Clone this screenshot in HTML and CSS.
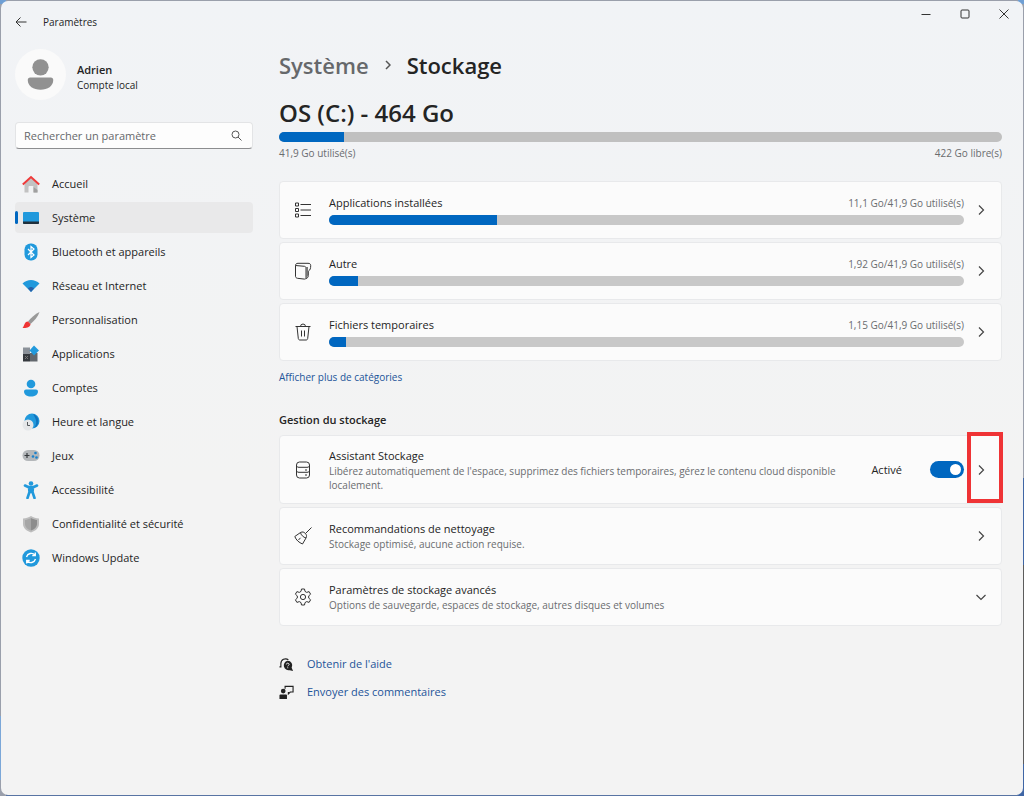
FILE: index.html
```html
<!DOCTYPE html>
<html lang="fr">
<head>
  <meta charset="UTF-8" />
  <meta name="viewport" content="width=device-width, initial-scale=1.0"/>
  <title>Paramètres</title>
  <link rel="stylesheet" href="styles.css">
</head>
<body>

<div class="window">
  <header class="titlebar">
    <button class="back" aria-label="Retour">
      <svg width="12" height="12" viewBox="0 0 12 12"><path d="M11.5 6H1M5.5 1.5L1 6l4.500 4.500"/></svg>
    </button>
    <span class="app-name">Paramètres</span>
    <div class="window-buttons">
      <button aria-label="Réduire"><svg width="10" height="10" viewBox="0 0 10 10"><path d="M0.500 5.500h9"/></svg></button>
      <button aria-label="Agrandir"><svg width="10" height="10" viewBox="0 0 10 10"><rect x="1" y="1" width="8" height="8" rx="1"/></svg></button>
      <button aria-label="Fermer"><svg width="10" height="10" viewBox="0 0 10 10"><path d="M0.500 0.500l9 9M9.500 0.500l-9 9"/></svg></button>
    </div>
  </header>

  <div class="layout">
    <aside class="sidebar">
      <div class="profile">
        <svg class="avatar" viewBox="0 0 50 50">
          <circle cx="25" cy="25" r="25" fill="#fafafa"/>
          <circle cx="25" cy="18" r="8" fill="#919191"/>
          <path d="M15 28h20a2.500 2.500 0 0 1 2.500 2.500C37.500 36.500 32 40 25 40s-12.500-3.500-12.500-9.500A2.500 2.500 0 0 1 15 28z" fill="#919191"/>
        </svg>
        <div class="who">
          <div class="name">Adrien</div>
          <div class="account">Compte local</div>
        </div>
      </div>

      <div class="search">
        <input type="text" placeholder="Rechercher un paramètre" aria-label="Rechercher un paramètre">
        <svg width="11" height="11" viewBox="0 0 11 11"><circle cx="4.500" cy="4.500" r="3.500"/><path d="M7 7l3.500 3.500"/></svg>
      </div>

      <nav>
        <a href="#">
          <svg viewBox="0 0 18 18"><path d="M2.500 8L9 3l6.500 5v9.500h-4V12a1 1 0 0 0-1-1h-3a1 1 0 0 0-1 1v5.500h-4z" fill="#c2c2c2"/><path d="M11.500 17.500V12l4 3v2.500z" fill="#a0a0a0"/><path d="M0.800 9.500L9 2l8.200 7.500" fill="none" stroke="#ef3a3a" stroke-width="2"/></svg>
          Accueil
        </a>
        <a href="#" class="active">
          <svg viewBox="0 0 18 18"><rect x="1" y="3" width="16" height="12" rx="1" fill="#2199dc"/><path d="M1 12.500h16V14a1 1 0 0 1-1 1H2a1 1 0 0 1-1-1z" fill="#20303c"/></svg>
          Système
        </a>
        <a href="#">
          <svg viewBox="0 0 18 18"><rect x="2.500" y="0.500" width="13" height="17" rx="6" fill="#2199dc"/><path d="M6 6l6 6-3 2.500v-11L12 6l-6 6" fill="none" stroke="#fff" stroke-width="1.200"/></svg>
          Bluetooth et appareils
        </a>
        <a href="#">
          <svg viewBox="0 0 18 18"><path d="M0.500 6.500C5 1.800 13 1.800 17.500 6.500L9 15z" fill="#2199dc"/><path d="M6 11.500c1.500-2 4.500-2 6 0L9 15z" fill="#2860a8"/></svg>
          Réseau et Internet
        </a>
        <a href="#">
          <svg viewBox="0 0 18 18"><path d="M17.500 1C13 3 9 7 6 10.500l2.500 2.500C12 10 16 6 17.500 1z" fill="#999"/><path d="M6 10.500l2.500 2.500c0 3-4 4.500-8 4 2-1.500 1.500-6.500 5.500-6.500z" fill="#ef3434"/></svg>
          Personnalisation
        </a>
        <a href="#">
          <svg viewBox="0 0 18 18"><path d="M1 2.500h7V9H1z" fill="#8b9199"/><path d="M1 9h7v7.500H1z" fill="#35393e"/><path d="M8 8h7.500v8.500H8z" fill="#62676d"/><path d="M12 0.500l5 5-5 5-4.500-5z" fill="#2199dc"/><path d="M3 14l3-3M3 11l3 3" stroke="#777"/></svg>
          Applications
        </a>
        <a href="#">
          <svg viewBox="0 0 18 18"><circle cx="9" cy="5" r="4.300" fill="#2199dc"/><path d="M4 10.500h10a2 2 0 0 1 2 2c0 3-3 5-7 5s-7-2-7-5a2 2 0 0 1 2-2z" fill="#2199dc"/></svg>
          Comptes
        </a>
        <a href="#">
          <svg viewBox="0 0 18 18"><circle cx="10" cy="8" r="7.500" fill="#2199dc"/><path d="M11 1a7.500 7.500 0 0 1 1 14c4-5 2-9-1-14z" fill="#1173bd"/><circle cx="6" cy="12" r="5.500" fill="#e4e6e8"/><path d="M5.500 9v3.500H8" fill="none" stroke="#55595d"/></svg>
          Heure et langue
        </a>
        <a href="#">
          <svg viewBox="0 0 18 18"><rect x="0.500" y="3" width="17" height="11" rx="5.500" fill="#b4b7ba"/><path d="M5 6v5M2.500 8.500h5" stroke="#36393c" stroke-width="1.200"/><circle cx="13.500" cy="6" r="1.300" fill="#1b82cc"/><circle cx="11" cy="9.500" r="1.300" fill="#1b82cc"/><circle cx="14.500" cy="10.500" r="1.300" fill="#1b82cc"/></svg>
          Jeux
        </a>
        <a href="#">
          <svg viewBox="0 0 18 18"><circle cx="9" cy="2.500" r="2.300" fill="#2199dc"/><path d="M3 4.500l4 2h4l4-2M9 6v5M7 6l.5 5L5.500 17M11 6l-.5 5 2 6" fill="none" stroke="#2199dc" stroke-width="2.600" stroke-linecap="round"/></svg>
          Accessibilité
        </a>
        <a href="#">
          <svg viewBox="0 0 18 18"><path d="M9 1c2.500 1.600 5 2.300 8 2.500V9c0 4-3.500 7-8 8.500C4.500 16 1 13 1 9V3.500C4 3.300 6.500 2.600 9 1z" fill="#bdbdbd"/><path d="M9 3c2 1.200 4 1.800 6 2v4c0 3-2.500 5.300-6 6.500z" fill="#8d8d8d"/><path d="M9 3C7 4.200 5 4.800 3 5v4c0 3 2.500 5.300 6 6.500z" fill="#a6a6a6"/></svg>
          Confidentialité et sécurité
        </a>
        <a href="#">
          <svg viewBox="0 0 18 18"><circle cx="9" cy="9" r="8.700" fill="#2199dc"/><path d="M4.500 8a5 5 0 0 1 8.500-2M13.500 10a5 5 0 0 1-8.500 2M13.300 3.500V6.500h-3M4.700 14.500v-3h3" fill="none" stroke="#fff" stroke-width="1.300"/></svg>
          Windows Update
        </a>
      </nav>
    </aside>

    <main>
      <h1 class="breadcrumb">
        <a href="#">Système</a>
        <svg width="6" height="10" viewBox="0 0 6 10"><path d="M1 1l4 4-4 4"/></svg>
        <span>Stockage</span>
      </h1>

      <section class="drive">
        <h2>OS (C:) - 464 Go</h2>
        <progress value="41.9" max="464" aria-label="Espace utilisé"></progress>
        <div class="drive-labels"><span>41,9 Go utilisé(s)</span><span>422 Go libre(s)</span></div>
      </section>

      <div class="cards">
        <a href="#" class="card">
          <svg class="icon" viewBox="0 0 18 18"><path d="M1.500 2h3v3h-3zM1.500 7.500h3v3h-3zM1.500 13h3v3h-3zM6.500 3.500H17M6.500 9H17M6.500 14.500H17"/></svg>
          <div class="content">
            <div class="usage"><span class="title">Applications installées</span><span class="size">11,1 Go/41,9 Go utilisé(s)</span></div>
            <progress value="11.1" max="41.9" aria-label="Applications installées"></progress>
          </div>
          <svg class="chevron" viewBox="0 0 10 10"><path d="M3 0.500L7.500 5 3 9.500"/></svg>
        </a>
        <a href="#" class="card">
          <svg class="icon" viewBox="0 0 18 18"><path d="M1.500 3.500l9 .8c.8.100 1.500.8 1.500 1.600v10c0 .9-.6 1.300-1.500 1.200l-7-.8c-1.200-.2-2-.9-2-2zM1.500 3.500c0-1.500 1-2.200 2.500-2.200h10c1.800 0 2.700.7 2.700 2.300 0 2.600-.5 4.400-2.200 5.600L12 11.500M12 16.500c1.600-.5 2.300-1.300 2.300-3V9.500"/><path d="M12 5h2v9l-2 2z" fill="#777" stroke="none"/></svg>
          <div class="content">
            <div class="usage"><span class="title">Autre</span><span class="size">1,92 Go/41,9 Go utilisé(s)</span></div>
            <progress value="1.92" max="41.9" aria-label="Autre"></progress>
          </div>
          <svg class="chevron" viewBox="0 0 10 10"><path d="M3 0.500L7.500 5 3 9.500"/></svg>
        </a>
        <a href="#" class="card">
          <svg class="icon" viewBox="0 0 18 18"><path d="M1.500 3.500h15M6.500 3.500a2.500 2.500 0 0 1 5 0M3 3.500l1.300 12c.1.900.7 1.500 1.600 1.500h6.200c.9 0 1.500-.6 1.600-1.500l1.300-12M7.500 7.500v6M10.500 7.500v6"/></svg>
          <div class="content">
            <div class="usage"><span class="title">Fichiers temporaires</span><span class="size">1,15 Go/41,9 Go utilisé(s)</span></div>
            <progress value="1.15" max="41.9" aria-label="Fichiers temporaires"></progress>
          </div>
          <svg class="chevron" viewBox="0 0 10 10"><path d="M3 0.500L7.500 5 3 9.500"/></svg>
        </a>
      </div>
      <a href="#" class="more">Afficher plus de catégories</a>

      <h3>Gestion du stockage</h3>
      <div class="cards">
        <div class="card tall">
          <svg class="icon" viewBox="0 0 18 18"><rect x="2.500" y="1" width="13" height="16" rx="3"/><path d="M2.500 4.500c0 1.200 1 1.800 2.500 1.800h8c1.500 0 2.500-.6 2.500-1.800M2.500 9.500c0 1.200 1 1.800 2.500 1.800h8c1.500 0 2.500-.6 2.500-1.800M11 9h2M11 14h2"/></svg>
          <div class="content">
            <div class="title">Assistant Stockage</div>
            <div class="desc">Libérez automatiquement de l'espace, supprimez des fichiers temporaires, gérez le contenu cloud disponible localement.</div>
          </div>
          <label class="switch">Activé <input type="checkbox" checked></label>
          <button class="open" aria-label="Ouvrir Assistant Stockage"><svg class="chevron" viewBox="0 0 10 10"><path d="M3 0.500L7.500 5 3 9.500"/></svg></button>
          <div class="highlight"></div>
        </div>
        <a href="#" class="card">
          <svg class="icon" viewBox="0 0 18 18"><path d="M17.500 0.500L11.500 6.500M6.500 5.500c2-1 3.500-.5 4.700.8 1.300 1.200 1.800 2.700.8 4.700l-3.500 6C5 15.500 2 13 0.800 9.500zM6.500 5.500c0 2 3 5 5.500 5.500M4.500 13l2-2.200" stroke-linejoin="round"/></svg>
          <div class="content">
            <div class="title">Recommandations de nettoyage</div>
            <div class="desc">Stockage optimisé, aucune action requise.</div>
          </div>
          <svg class="chevron" viewBox="0 0 10 10"><path d="M3 0.500L7.500 5 3 9.500"/></svg>
        </a>
        <button class="card">
          <svg class="icon" viewBox="0 0 18 18"><circle cx="9" cy="9" r="2.600"/><path d="M7.500 1h3l.5 2.400 1.700 1 2.400-.8 1.500 2.600-1.900 1.700v2.200l1.900 1.700-1.500 2.600-2.400-.8-1.700 1-.5 2.400h-3L7 14.600l-1.700-1-2.400.8-1.500-2.600 1.900-1.700V7.900L1.400 6.200l1.500-2.600 2.400.8 1.700-1z" stroke-linejoin="round"/></svg>
          <div class="content">
            <div class="title">Paramètres de stockage avancés</div>
            <div class="desc">Options de sauvegarde, espaces de stockage, autres disques et volumes</div>
          </div>
          <svg class="chevron" viewBox="0 0 10 10"><path d="M0.500 3L5 7.500 9.500 3"/></svg>
        </button>
      </div>

      <footer class="links">
        <a href="#">
          <svg viewBox="0 0 16 16"><path d="M2 10V7a5 5 0 0 1 8-4M2 6.500v4H.5" fill="none" stroke="#222" stroke-width="1.200"/><path d="M9 4a5 5 0 0 1 4.500 7.500L15 15l-3.500-1A5 5 0 1 1 9 4z" fill="#222"/><path d="M7.800 8c0-2 3-1.800 3 0 0 1-1.500 1-1.500 2M9.300 11v1" fill="none" stroke="#f3f3f3"/></svg>
          Obtenir de l'aide
        </a>
        <a href="#">
          <svg viewBox="0 0 16 16"><circle cx="4.500" cy="6.500" r="2.500" fill="#222"/><path d="M1.500 10h6a1 1 0 0 1 1 1v4h-8v-4a1 1 0 0 1 1-1z" fill="#222"/><path d="M6.500 4V1.500H15v6h-3l-2 2v-2" fill="none" stroke="#222" stroke-width="1.200"/></svg>
          Envoyer des commentaires
        </a>
      </footer>
    </main>
  </div>
</div>

</body>
</html>
```
FILE: styles.css
```css
:root {
  --accent: #0067c0;
  --text: #242424;
  --muted: #6a6c6f;
  --link: #1d5499;
  --card-bg: #fbfbfb;
  --card-border: #e8e9eb;
  --track: #c8c8c8;
}

* {
  box-sizing: border-box;
}

/* desktop behind the window, only its edges show */
body {
  margin: 0;
  font-family: "Open Sans", "Noto Sans", sans-serif;
  font-size: 11px;
  line-height: 16px;
  color: var(--text);
  background:
    linear-gradient(#6f9fd4 0 4px, #9a9fab 4px 90%, #7ba7d8 90% 98%, #9a9fab 98%) left / 6px 100% no-repeat,
    linear-gradient(#6f9fd4 0 4px, #9a9fab 4px 60%, #3f66a5 60% 71%, #5c5c5c 71% 96%, #3f66a5 96%) right / 6px 100% no-repeat,
    linear-gradient(#9a9fab 50%, #5874a3 50%);
}

a {
  color: inherit;
  text-decoration: none;
}

button {
  font: inherit;
  color: inherit;
  background: none;
  border: none;
  padding: 0;
  text-align: left;
  cursor: pointer;
}

svg {
  flex: none;
  display: block;
}

.window {
  min-height: 100vh;
  border: 1px solid transparent;
  border-radius: 8px;
  background: linear-gradient(#f1f3f6, #f3f3f3 60%) padding-box;
}

.titlebar {
  display: flex;
  align-items: center;
  height: 42px;
  padding-left: 14px;
}

.titlebar svg {
  fill: none;
  stroke: #333;
}

.app-name {
  margin-left: 16px;
  font-size: 10px;
}

.window-buttons {
  display: flex;
  align-self: flex-start;
  margin-left: auto;
}

.window-buttons button {
  display: flex;
  align-items: center;
  justify-content: center;
  width: 39px;
  height: 26px;
}

.layout {
  display: grid;
  grid-template-columns: 238px 1fr;
  gap: 26px;
  padding: 6px 21px 24px 14px;
}

/* sidebar */
.profile {
  display: flex;
  align-items: center;
  gap: 11px;
}

.avatar {
  width: 51px;
  height: 51px;
}

.who {
  padding-top: 4px;
}

.name {
  font-weight: 600;
}

.account {
  font-size: 10px;
  line-height: 14px;
}

.search {
  display: flex;
  align-items: center;
  height: 27px;
  margin: 22px 0 19px;
  padding: 0 10px 0 8px;
  background: #fdfdfd;
  border: 1px solid #e3e4e6;
  border-bottom-color: #8c8d8f;
  border-radius: 4px;
}

.search input {
  flex: 1;
  min-width: 0;
  padding: 0;
  border: none;
  outline: none;
  background: none;
  font: inherit;
}

.search input::placeholder {
  color: #66686b;
}

.search svg {
  fill: none;
  stroke: #555;
}

nav {
  display: flex;
  flex-direction: column;
  gap: 3px;
}

nav a {
  position: relative;
  display: flex;
  align-items: center;
  gap: 12px;
  height: 31px;
  padding-left: 7px;
  border-radius: 4px;
}

nav svg {
  width: 18px;
  height: 18px;
}

nav .active {
  background: #e9e9ea;
}

nav .active::before {
  content: "";
  position: absolute;
  left: 0;
  top: 9px;
  width: 3px;
  height: 13px;
  border-radius: 2px;
  background: var(--accent);
}

/* main */
h1, h2, h3 {
  margin: 0;
  font-weight: 600;
}

.breadcrumb {
  display: flex;
  align-items: center;
  gap: 16px;
  font-size: 22px;
  line-height: 32px;
}

.breadcrumb a {
  color: #66686b;
}

.breadcrumb svg {
  fill: none;
  stroke: #555;
  stroke-width: 1.5;
}

.drive {
  margin: 16px 0 21px;
}

.drive h2 {
  font-size: 24px;
  line-height: 32px;
  margin-bottom: 3px;
}

progress {
  display: block;
  width: 100%;
  height: 10px;
  appearance: none;
  border: none;
  border-radius: 5px;
  overflow: hidden;
  background: var(--track);
}

progress::-webkit-progress-bar {
  background: var(--track);
}

progress::-webkit-progress-value {
  background: var(--accent);
}

.drive progress,
.drive progress::-webkit-progress-bar {
  --track: #c0c0c0;
}

.drive-labels {
  display: flex;
  justify-content: space-between;
  margin-top: 4px;
  font-size: 10px;
  line-height: 14px;
  color: var(--muted);
}

.cards {
  display: flex;
  flex-direction: column;
  gap: 3px;
}

.card {
  position: relative;
  display: flex;
  align-items: center;
  min-height: 58px;
  padding: 0 15px 0 14px;
  background: var(--card-bg);
  border: 1px solid var(--card-border);
  border-radius: 4px;
}

.card.tall {
  min-height: 69px;
}

.icon {
  width: 18px;
  height: 18px;
  margin-right: 17px;
  fill: none;
  stroke: #333;
}

.content {
  flex: 1;
}

.chevron {
  width: 10px;
  height: 10px;
  margin-left: 12px;
  fill: none;
  stroke: #444;
  stroke-width: 1.2;
}

.usage {
  display: flex;
  justify-content: space-between;
  margin-bottom: 4px;
}

.size {
  font-size: 10px;
  color: var(--muted);
}

.desc {
  font-size: 10px;
  line-height: 14px;
  color: var(--muted);
}

.switch {
  display: flex;
  align-items: center;
  gap: 28px;
  margin-left: 32px;
  cursor: pointer;
}

.switch input {
  appearance: none;
  display: flex;
  align-items: center;
  width: 34px;
  height: 17px;
  margin: 0;
  padding: 0 3px;
  border-radius: 9px;
  background: var(--track);
}

.switch input::before {
  content: "";
  width: 11px;
  height: 11px;
  border-radius: 50%;
  background: white;
}

.switch input:checked {
  justify-content: flex-end;
  background: var(--accent);
}

.highlight {
  position: absolute;
  top: -4px;
  right: -2px;
  bottom: 0;
  width: 36px;
  border: 4px solid #ef3335;
  pointer-events: none;
}

.more {
  display: inline-block;
  margin: 8px 0 27px;
  font-size: 10px;
  color: var(--link);
}

h3 {
  margin-bottom: 7px;
  font-size: 11px;
}

.links {
  display: flex;
  flex-direction: column;
  align-items: flex-start;
  gap: 12px;
  margin-top: 30px;
  color: var(--link);
}

.links a {
  display: flex;
  align-items: center;
  gap: 13px;
}

.links svg {
  width: 15px;
  height: 15px;
}
```
